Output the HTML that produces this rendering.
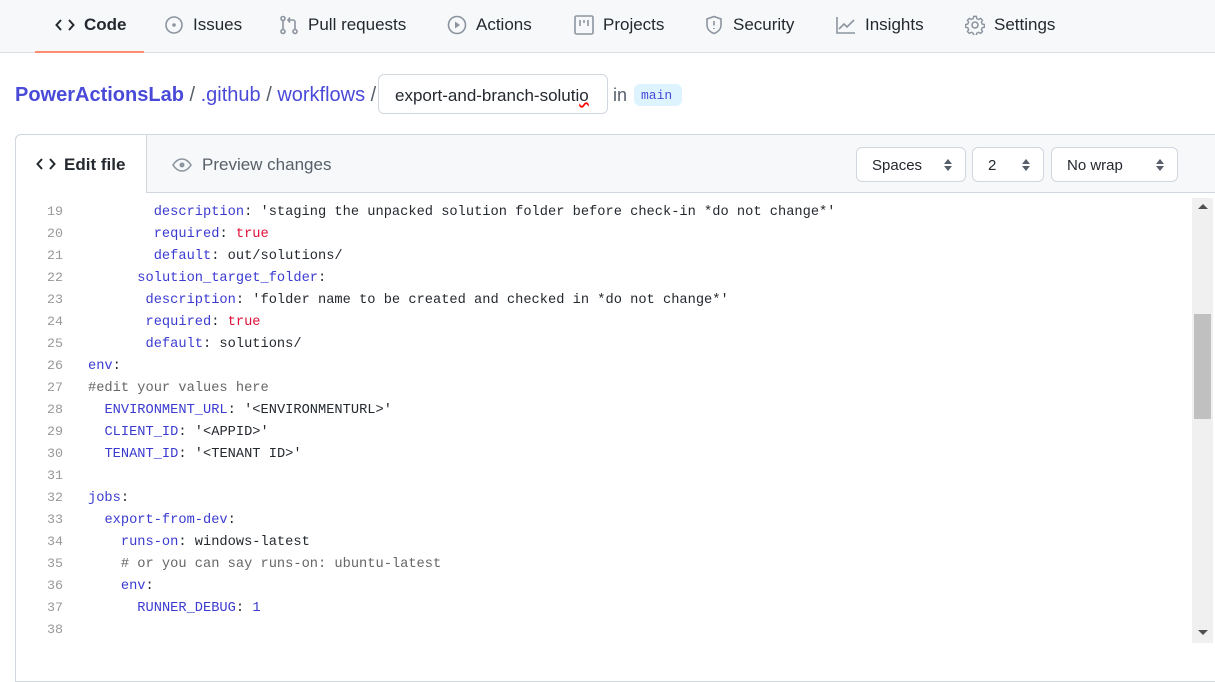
<!DOCTYPE html>
<html><head><meta charset="utf-8"><style>
*{box-sizing:border-box;margin:0;padding:0}
body{width:1215px;height:682px;overflow:hidden;background:#fff;font-family:"Liberation Sans",sans-serif;color:#24292f;position:relative}
.nav{position:absolute;left:0;top:0;width:1215px;height:53px;background:#f6f8fa;border-bottom:1px solid #d8dee4}
.tab{position:absolute;top:-2px;height:53px;display:flex;align-items:center;font-size:17px;color:#24292f}
.tab svg{margin-right:9px}
.sel{position:absolute;left:35px;top:51px;width:109px;height:2px;background:#fd8c73}
.crumb{position:absolute;left:15px;top:84px;font-size:20px;color:#57606a}
.crumb a{color:#4a4ad8;text-decoration:none}
.crumb a.b{font-weight:bold}
.fname{position:absolute;left:378px;top:74px;width:230px;height:40px;border:1px solid #d0d7de;border-radius:6px;font-size:17px;padding:11px 0 0 16px;overflow:hidden;white-space:nowrap;color:#24292f}
.in{position:absolute;left:613px;top:85px;font-size:18px;color:#57606a}
.main{position:absolute;left:634px;top:84px;height:22px;width:48px;background:#ddf4ff;border-radius:6px;font-family:"Liberation Mono",monospace;font-size:13px;color:#4a4ad8;padding:4px 0 0 7px}
.box{position:absolute;left:15px;top:134px;width:1200px;height:548px;border:1px solid #d0d7de;border-radius:6px 0 0 0;border-right:0}
.hdr{position:absolute;left:15px;top:134px;width:1200px;height:59px;background:#f6f8fa;border:1px solid #d0d7de;border-right:0;border-radius:6px 0 0 0}
.et{position:absolute;left:15px;top:134px;width:132px;height:59px;background:#fff;border:1px solid #d0d7de;border-bottom:0;border-radius:6px 0 0 0;font-size:17px;font-weight:bold;padding:20px 0 0 20px}
.pv{position:absolute;left:172px;top:155px;font-size:17px;color:#57606a;display:flex;align-items:center}
.dd{position:absolute;top:147px;height:35px;background:#fff;border:1px solid #d0d7de;border-radius:6px;font-size:15px;padding:9px 0 0 15px}
.dd i{position:absolute;right:13px;top:10px;width:0;height:0}
.code{position:absolute;left:16px;top:202px;font-family:"Liberation Mono",monospace;font-size:13.7px;line-height:22px;white-space:pre}
.ln{display:inline-block;width:47px;text-align:right;color:#999;margin-right:25px;font-size:13.33px}
.k{color:#3b3bd1}.s{color:#24292f}.t{color:#e0103a}.c{color:#666}.n{color:#3b3bd1}
.sb{position:absolute;left:1192px;top:198px;width:21px;height:445px;background:#f0f0f0}
.th{position:absolute;left:1194px;top:314px;width:17px;height:105px;background:#c0c0c0}
</style></head><body>
<div class="nav">
<div class="tab" style="left:55px;font-weight:bold"><svg width="20" height="16" viewBox="0 0 20 16"><path d="M6 3L1.5 8 6 13M14 3l4.5 5L14 13" fill="none" stroke="#24292f" stroke-width="2"/></svg>Code</div>
<div class="tab" style="left:164px"><svg width="20" height="20" viewBox="0 0 20 20"><circle cx="10" cy="10" r="8" fill="none" stroke="#8c959f" stroke-width="1.6"/><circle cx="10" cy="10" r="1.8" fill="#8c959f"/></svg>Issues</div>
<div class="tab" style="left:279px"><svg width="20" height="20" viewBox="0 0 20 20" fill="none" stroke="#8c959f" stroke-width="1.6"><circle cx="4" cy="3.5" r="2"/><circle cx="4" cy="16.5" r="2"/><circle cx="16" cy="16.5" r="2"/><path d="M4 5.5v9M16 14.5V7a2 2 0 0 0-2-2H9M11 2.5L9 5l2 2.5"/></svg>Pull requests</div>
<div class="tab" style="left:447px"><svg width="20" height="20" viewBox="0 0 20 20"><circle cx="10" cy="10" r="8.5" fill="none" stroke="#8c959f" stroke-width="1.6"/><path d="M8 6.5v7l5-3.5z" fill="#8c959f"/></svg>Actions</div>
<div class="tab" style="left:574px"><svg width="20" height="20" viewBox="0 0 20 20" fill="none" stroke="#8c959f" stroke-width="1.6"><rect x="1" y="1" width="18" height="18" rx="1.5"/><path d="M6 5v6M10 5v3M14 5v6"/></svg>Projects</div>
<div class="tab" style="left:704px"><svg width="20" height="20" viewBox="0 0 20 20" fill="none" stroke="#8c959f" stroke-width="1.6"><path d="M10 1.5l7 2.5v6c0 4-3 7-7 8.5-4-1.5-7-4.5-7-8.5V4z"/><path d="M10 6v4.5M10 13v1"/></svg>Security</div>
<div class="tab" style="left:836px"><svg width="20" height="20" viewBox="0 0 20 20" fill="none" stroke="#8c959f" stroke-width="1.6"><path d="M1 2v16h18M3 14l5-5 3 3 7-7"/></svg>Insights</div>
<div class="tab" style="left:965px"><svg width="20" height="20" viewBox="0 0 20 20" fill="none" stroke="#8c959f" stroke-width="1.6"><circle cx="10" cy="10" r="3"/><path d="M8.5 1.5h3l.5 2.5 2 1 2.3-1.2 2 2-1.2 2.3 1 2 2.4.5v3l-2.4.5-1 2 1.2 2.3-2 2-2.3-1.2-2 1-.5 2.4h-3l-.5-2.4-2-1-2.3 1.2-2-2 1.2-2.3-1-2-2.4-.5v-3l2.4-.5 1-2-1.200-2.3 2-2 2.3 1.2 2-1z" transform="scale(.9) translate(1.1 0)"/></svg>Settings</div>
<div class="sel"></div>
</div>
<div class="crumb"><a class="b">PowerActionsLab</a> / <a>.github</a> / <a>workflows</a> /</div>
<div class="fname">export-and-branch-soluti<span style="text-decoration:underline wavy red">o</span></div>
<div class="in">in</div>
<div class="main">main</div>
<div class="box"></div>
<div class="hdr"></div>
<div class="et"><svg width="20" height="16" viewBox="0 0 20 16" style="vertical-align:-2px;margin-right:8px"><path d="M6 3L1.5 8 6 13M14 3l4.5 5L14 13" fill="none" stroke="#24292f" stroke-width="2"/></svg>Edit file</div>
<div class="pv"><svg width="20" height="14" viewBox="0 0 20 14" style="margin-right:10px"><path d="M1 7c2.5-4 5.5-6 9-6s6.5 2 9 6c-2.5 4-5.5 6-9 6S3.5 11 1 7z" fill="none" stroke="#8c959f" stroke-width="1.6"/><circle cx="10" cy="7" r="2.5" fill="#8c959f"/></svg>Preview changes</div>
<div class="dd" style="left:856px;width:110px">Spaces<i style="border:4px solid transparent;border-bottom:5px solid #57606a;top:7px"></i><i style="border:4px solid transparent;border-top:5px solid #57606a;top:18px"></i></div>
<div class="dd" style="left:972px;width:72px">2<i style="border:4px solid transparent;border-bottom:5px solid #57606a;top:7px"></i><i style="border:4px solid transparent;border-top:5px solid #57606a;top:18px"></i></div>
<div class="dd" style="left:1051px;width:127px">No wrap<i style="border:4px solid transparent;border-bottom:5px solid #57606a;top:7px"></i><i style="border:4px solid transparent;border-top:5px solid #57606a;top:18px"></i></div>
<div class="code"><span class="ln">19</span>        <span class="k">description</span>: 'staging the unpacked solution folder before check-in *do not change*'
<span class="ln">20</span>        <span class="k">required</span>: <span class="t">true</span>
<span class="ln">21</span>        <span class="k">default</span>: out/solutions/
<span class="ln">22</span>      <span class="k">solution_target_folder</span>:
<span class="ln">23</span>       <span class="k">description</span>: 'folder name to be created and checked in *do not change*'
<span class="ln">24</span>       <span class="k">required</span>: <span class="t">true</span>
<span class="ln">25</span>       <span class="k">default</span>: solutions/
<span class="ln">26</span><span class="k">env</span>:
<span class="ln">27</span><span class="c">#edit your values here</span>
<span class="ln">28</span>  <span class="k">ENVIRONMENT_URL</span>: '&lt;ENVIRONMENTURL&gt;'
<span class="ln">29</span>  <span class="k">CLIENT_ID</span>: '&lt;APPID&gt;'
<span class="ln">30</span>  <span class="k">TENANT_ID</span>: '&lt;TENANT ID&gt;'
<span class="ln">31</span>
<span class="ln">32</span><span class="k">jobs</span>:
<span class="ln">33</span>  <span class="k">export-from-dev</span>:
<span class="ln">34</span>    <span class="k">runs-on</span>: windows-latest
<span class="ln">35</span>    <span class="c"># or you can say runs-on: ubuntu-latest</span>
<span class="ln">36</span>    <span class="k">env</span>:
<span class="ln">37</span>      <span class="k">RUNNER_DEBUG</span>: <span class="n">1</span>
<span class="ln">38</span></div>
<div class="sb"><div style="position:absolute;left:6px;top:6px;border:5px solid transparent;border-bottom:5px solid #505050;border-top:0"></div><div style="position:absolute;left:6px;bottom:8px;border:5px solid transparent;border-top:5px solid #505050;border-bottom:0"></div></div>
<div class="th"></div>
</body></html>
